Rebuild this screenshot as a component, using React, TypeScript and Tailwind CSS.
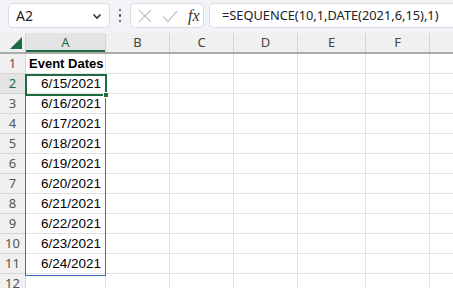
import React from "react";

const cols = ["A", "B", "C", "D", "E", "F"];
const colW = ["w-[80px]", "w-[64px]", "w-[64px]", "w-[64px]", "w-[68px]", "w-[64px]"];
const dates = [
  "6/15/2021",
  "6/16/2021",
  "6/17/2021",
  "6/18/2021",
  "6/19/2021",
  "6/20/2021",
  "6/21/2021",
  "6/22/2021",
  "6/23/2021",
  "6/24/2021",
];

export default function App() {
  const rows: (string | null)[] = ["Event Dates", ...dates, null];
  return (
    <div className="w-[453px] h-[288px] overflow-hidden bg-white font-['Noto_Sans',sans-serif]">
      {/* Toolbar */}
      <div className="h-[33px] bg-[#f1f3f6] flex items-start pt-[3px] pl-[8px]">
        <div className="shrink-0 w-[102px] h-[25px] bg-white border border-[#dadce0] rounded-[5px] flex items-center pl-[7px] pr-[6px]">
          <span className="text-[14px] text-[#222] flex-1 leading-none">A2</span>
          <svg width="12" height="12" viewBox="0 0 12 12">
            <path d="M2.5 4.5 L6 8 L9.5 4.5" stroke="#333" strokeWidth="1.6" fill="none" />
          </svg>
        </div>
        <div className="shrink-0 w-[20px] h-[25px] flex flex-col items-center justify-center gap-[3px]">
          <div className="w-[2.5px] h-[2.5px] bg-[#444] rounded-full" />
          <div className="w-[2.5px] h-[2.5px] bg-[#444] rounded-full" />
          <div className="w-[2.5px] h-[2.5px] bg-[#444] rounded-full" />
        </div>
        <div className="shrink-0 w-[74px] h-[25px] bg-white border border-[#dadce0] rounded-[5px] flex items-center pl-[6px]">
          <svg width="16" height="16" viewBox="0 0 16 16" className="mr-[8px]">
            <path d="M2 2 L14 14 M14 2 L2 14" stroke="#c4c4c4" strokeWidth="1.2" fill="none" />
          </svg>
          <svg width="18" height="16" viewBox="0 0 18 16">
            <path d="M2 8.5 L7 13.5 L16 3" stroke="#c4c4c4" strokeWidth="1.2" fill="none" />
          </svg>
          <span className="ml-[9px] text-[16px] italic font-['Liberation_Serif',serif] text-[#333] leading-none">
            fx
          </span>
        </div>
        <div className="ml-[5px] flex-1 min-w-0 overflow-hidden h-[25px] bg-white border border-r-0 border-[#dadce0] rounded-l-[5px] flex items-center pl-[12px]">
          <span className="text-[12.8px] text-[#222] leading-none whitespace-nowrap">
            =SEQUENCE(10,1,DATE(2021,6,15),1)
          </span>
        </div>
      </div>

      {/* Grid */}
      <div className="relative">
        {/* Header row */}
        <div className="flex h-[21px] border-b-2 border-[#ababab] bg-[#f0f0f0]">
          <div className="w-[26px] shrink-0 border-r border-[#d5d5d5] flex items-end justify-end pr-[3px] pb-[3px]">
            <svg width="12" height="12" viewBox="0 0 12 12">
              <path d="M12 0 L12 12 L0 12 Z" fill="#1e6b41" />
            </svg>
          </div>
          {cols.map((c, i) => (
            <div
              key={c}
              className={`${colW[i]} shrink-0 border-r border-[#d5d5d5] flex items-center justify-center text-[13px] leading-none ${
                i === 0 ? "bg-[#e4e4e4] text-[#1e6b41] shadow-[inset_0_-2px_0_#1e6b41]" : "text-[#444]"
              }`}
            >
              {c}
            </div>
          ))}
          <div className="flex-1" />
        </div>

        {/* Rows */}
        {rows.map((v, r) => (
          <div key={r} className="flex h-[20px]">
            <div
              className={`w-[26px] shrink-0 border-r border-b border-[#d5d5d5] flex items-center justify-center text-[13px] leading-none ${
                r === 1 ? "bg-[#e4e4e4] text-[#1e6b41]" : "bg-[#f0f0f0] text-[#555]"
              }`}
            >
              {r + 1}
            </div>
            <div
              className={`w-[80px] shrink-0 border-r border-b border-[#e1e1e1] flex items-center font-['Liberation_Sans',sans-serif] text-black leading-none whitespace-nowrap ${
                r === 0 ? "font-bold justify-start pl-[3px] text-[13px]" : "justify-end pr-[4px] text-[13.5px]"
              }`}
            >
              {v}
            </div>
            {colW.slice(1).map((w, i) => (
              <div key={i} className={`${w} shrink-0 border-r border-b border-[#e1e1e1]`} />
            ))}
            <div className="flex-1 border-b border-[#e1e1e1]" />
          </div>
        ))}

        {/* Spill range border A2:A11 */}
        <div className="absolute left-[25px] top-[42px] w-[81px] h-[201px] border border-[#3a6fc4] pointer-events-none" />
        {/* Active cell A2 */}
        <div className="absolute left-[25px] top-[41px] w-[82px] h-[22px] border-2 border-[#1e6b41] pointer-events-none" />
        {/* Fill handle */}
        <div className="absolute left-[103px] top-[59px] w-[6px] h-[6px] bg-[#1e6b41] border border-white pointer-events-none" />
      </div>
    </div>
  );
}
